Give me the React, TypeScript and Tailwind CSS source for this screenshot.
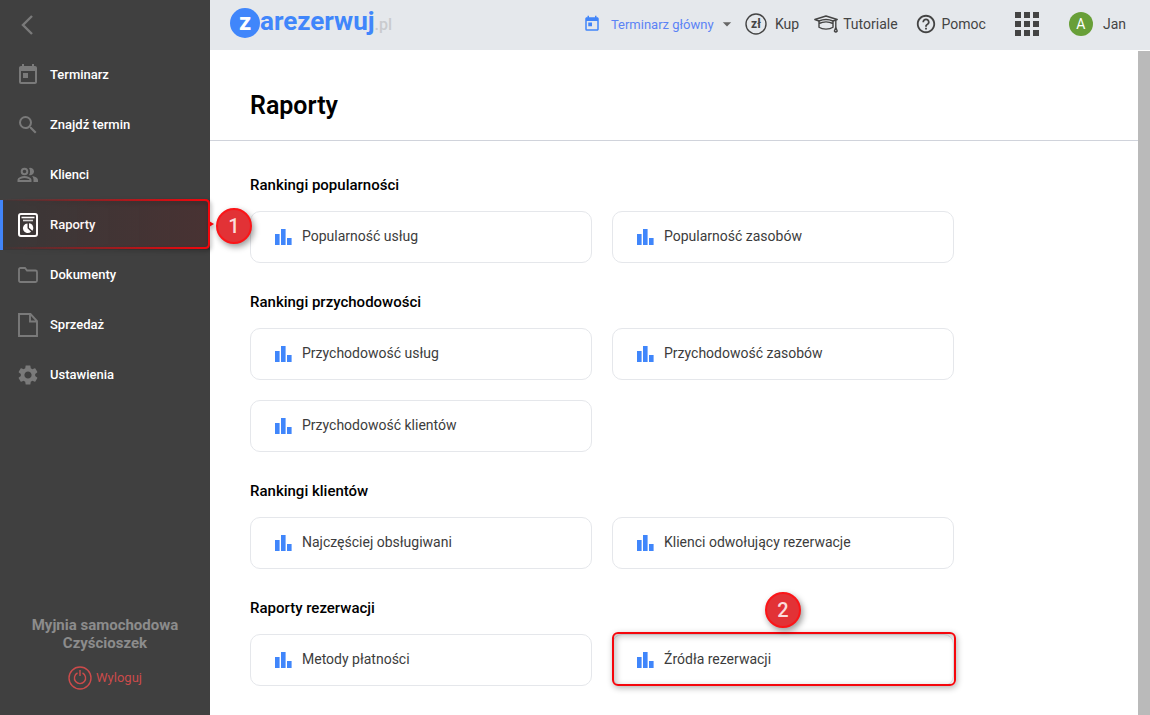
import type { ComponentType, ReactNode } from 'react'
import { MdArrowDropDown, MdOutlineHelpOutline, MdSearch, MdSettings, MdToday } from 'react-icons/md'

interface IconProps {
  className?: string
}

interface NavItem {
  label: string
  icon: ComponentType<IconProps>
  active?: boolean
}

interface ReportSection {
  title: string
  reports: string[]
}

function BackIcon() {
  return (
    <svg width="12" height="20" viewBox="0 0 12 20" fill="none" stroke="currentColor" strokeWidth="2.4">
      <path d="M11 1 2 10l9 9" />
    </svg>
  )
}

function CalendarIcon() {
  return <MdToday className="size-6" />
}

function SearchIcon() {
  return <MdSearch className="size-6" />
}

function PeopleIcon() {
  return (
    <svg width="22" height="16" viewBox="0 0 22 16" fill="none" stroke="currentColor" strokeWidth="2">
      <circle cx="7.5" cy="4.5" r="2.8" />
      <path d="M1.5 14v-1.2c0-1.6 3.6-2.8 6-2.8s6 1.2 6 2.8V14z" />
      <path d="M12 .9a3.8 3.8 0 1 1 0 7.2c1.4-2 1.4-5.2 0-7.2zM15 9c3 .5 6 1.8 6 4v2h-4.5v-2.2c0-1.6-.6-2.8-1.5-3.8z" fill="currentColor" stroke="none" />
    </svg>
  )
}

function ReportIcon() {
  return (
    <svg width="20" height="24" viewBox="0 0 20 24" fill="none" stroke="currentColor">
      <rect x="1" y="1" width="18" height="22" rx="2" strokeWidth="2" />
      <path d="M3.5 4.5h13" strokeWidth="1.6" />
      <path d="M5 7.5h10" strokeWidth="1.6" opacity=".8" />
      <path d="M9.5 10.5a4.8 4.8 0 1 0 3.6 8.2l-3.6-3.4z" fill="currentColor" stroke="none" />
      <path d="M11 10.2a4.8 4.8 0 0 1 3.4 7.5L11 14.8z" fill="currentColor" stroke="none" />
    </svg>
  )
}

function FolderIcon() {
  return (
    <svg width="20" height="16" viewBox="0 0 20 16" fill="none" stroke="currentColor" strokeWidth="1.8">
      <path d="M1 13.5v-11Q1 1 2.5 1H7l2 2.5h8.5Q19 3.5 19 5v8.5q0 1.5-1.5 1.5h-15Q1 15 1 13.5z" />
    </svg>
  )
}

function FileIcon() {
  return (
    <svg width="20" height="24" viewBox="0 0 20 24" fill="none" stroke="currentColor" strokeWidth="1.9">
      <path d="M1 1h11.5L19 8v15H1zM12 1v7.5h7" />
    </svg>
  )
}

function SettingsIcon() {
  return <MdSettings className="size-6" />
}

function PowerIcon() {
  return (
    <svg width="24" height="24" viewBox="0 0 24 24" fill="none" stroke="currentColor" strokeWidth="1.4">
      <circle cx="12" cy="12" r="11" />
      <path d="M9.5 7a5.6 5.6 0 1 0 5 0M12 4v6" />
    </svg>
  )
}

function CurrencyIcon() {
  return (
    <svg width="22" height="22" viewBox="0 0 22 22">
      <circle cx="11" cy="11" r="10" fill="none" stroke="currentColor" strokeWidth="1.4" />
      <text x="11" y="15" textAnchor="middle" fontSize="12" fontWeight="700" fill="currentColor">zł</text>
    </svg>
  )
}

function CapIcon() {
  return (
    <svg width="24" height="18" viewBox="0 0 24 18" fill="none" stroke="currentColor" strokeWidth="1.4" strokeLinejoin="round">
      <path d="M.8 4.5 12 1l11.2 3.5L19 6C15 4.3 9 4.3 5 6z" />
      <path d="M5 6v6.2c3.5 2.5 10.5 2.5 14 0V6M5 8.5c4-2 10-2 14 0M21.8 5v7.5" />
      <path d="m21.8 12.5 1.4 3.5q-1.4 2-2.8 0z" />
    </svg>
  )
}

function BarsIcon() {
  return (
    <svg width="17" height="16" viewBox="0 0 17 16" fill="#4086fb">
      <path d="M0 5h4.6v11H0zM6 0h4.6v16H6zM12 9h4.6v7H12z" />
    </svg>
  )
}

function AppsIcon() {
  return (
    <svg width="24" height="24" viewBox="0 0 24 24" fill="currentColor">
      <path d="M0 0h6v6H0zM9 0h6v6H9zM18 0h6v6h-6zM0 9h6v6H0zM9 9h6v6H9zM18 9h6v6h-6zM0 18h6v6H0zM9 18h6v6H9zM18 18h6v6h-6z" />
    </svg>
  )
}

const navItems: NavItem[] = [
  { label: 'Terminarz', icon: CalendarIcon },
  { label: 'Znajdź termin', icon: SearchIcon },
  { label: 'Klienci', icon: PeopleIcon },
  { label: 'Raporty', icon: ReportIcon, active: true },
  { label: 'Dokumenty', icon: FolderIcon },
  { label: 'Sprzedaż', icon: FileIcon },
  { label: 'Ustawienia', icon: SettingsIcon },
]

const sections: ReportSection[] = [
  { title: 'Rankingi popularności', reports: ['Popularność usług', 'Popularność zasobów'] },
  { title: 'Rankingi przychodowości', reports: ['Przychodowość usług', 'Przychodowość zasobów', 'Przychodowość klientów'] },
  { title: 'Rankingi klientów', reports: ['Najczęściej obsługiwani', 'Klienci odwołujący rezerwacje'] },
  { title: 'Raporty rezerwacji', reports: ['Metody płatności', 'Źródła rezerwacji'] },
]

const highlighted = 'Źródła rezerwacji'

function StepBadge({ children }: { children: ReactNode }) {
  return (
    <span className="flex size-9 items-center justify-center rounded-full border-2 border-[#fb1518] bg-[#e23236] text-xl font-medium text-[#fbdcdc] shadow-[2px_3px_6px_rgba(0,0,0,0.4)]">
      {children}
    </span>
  )
}

// Frame that fades in from the left and points at the first step
function NavFrame() {
  return (
    <svg className="pointer-events-none absolute -top-1 left-0 drop-shadow-[1px_2px_2px_rgba(0,0,0,0.4)]" width="216" height="56" viewBox="0 0 216 56">
      <defs>
        <linearGradient id="frame-line" gradientUnits="userSpaceOnUse" x1="0" y1="0" x2="210" y2="0">
          <stop offset="0" stopColor="#f5060c" stopOpacity="0" />
          <stop offset="1" stopColor="#f5060c" />
        </linearGradient>
        <linearGradient id="frame-fill" x1="0" y1="0" x2="1" y2="0">
          <stop offset="0" stopColor="#f5060c" stopOpacity="0" />
          <stop offset="1" stopColor="#f5060c" stopOpacity=".08" />
        </linearGradient>
      </defs>
      <path d="M0 4h205q4 0 4 4v40q0 4-4 4H0z" fill="url(#frame-fill)" />
      <path d="M0 4h205q4 0 4 4v40q0 4-4 4H0" fill="none" stroke="url(#frame-line)" strokeWidth="2" />
      <path d="m209 25 5 3-5 3z" fill="#f5060c" />
    </svg>
  )
}

function Sidebar() {
  return (
    <aside className="relative z-10 flex w-[210px] shrink-0 flex-col bg-[#404040]">
      <button aria-label="Zwiń menu" className="flex h-[50px] items-center pl-[21px] text-[#7a7a7a]">
        <BackIcon />
      </button>
      <nav>
        {navItems.map(({ label, icon: Icon, active }) => (
          <div key={label} className="relative">
            <a
              href="#"
              className={`flex h-[50px] items-center border-l-3 pl-3 text-[13px] font-medium text-white ${active ? 'border-[#4285f9] bg-[#3b3838]' : 'border-transparent'}`}
            >
              <span className={`mr-[9px] flex w-[26px] justify-center ${active ? 'text-white' : 'text-[#7a7a7a]'}`}>
                <Icon />
              </span>
              {label}
            </a>
            {active && (
              <>
                <NavFrame />
                <div className="absolute top-2 left-[216px]">
                  <StepBadge>1</StepBadge>
                </div>
              </>
            )}
          </div>
        ))}
      </nav>
      <div className="mt-auto flex flex-col items-center pb-[25px]">
        <p className="w-[160px] text-center text-[15px] leading-[18px] font-bold text-[#8c8c8c]">Myjnia samochodowa Czyścioszek</p>
        <button className="mt-3.5 flex items-center gap-1 text-[13px] leading-6 text-[#cc4b4b]">
          <PowerIcon />
          Wyloguj
        </button>
      </div>
    </aside>
  )
}

function Header() {
  return (
    <header className="flex h-[50px] items-center bg-[#e5e8ec] pr-6 pb-0.5 pl-5 text-sm text-[#444]">
      <a href="#" className="flex items-center pb-0.5 font-bold">
        <span className="flex size-[30px] items-center justify-center rounded-full bg-[#4086fb] pb-0.5 text-2xl leading-6 text-white">z</span>
        <span className="flex items-baseline leading-6">
          <span className="text-[26px] text-[#4086fb]">arezerwuj</span>
          <span className="text-base font-medium text-[#c9cbce]">.pl</span>
        </span>
      </a>
      <div className="ml-auto flex items-center">
        <MdToday className="mr-2.5 size-[18px] text-[#4285f9]" />
        <div className="relative">
          <select aria-label="Terminarz" className="w-[122px] appearance-none text-[13px] text-[#5b83f5]">
            <option>Terminarz główny</option>
          </select>
          <MdArrowDropDown className="pointer-events-none absolute top-0 -right-1 size-5 text-[#666]" />
        </div>
      </div>
      <nav className="ml-3 flex items-center">
        <a href="#" className="flex items-center gap-2">
          <CurrencyIcon />
          Kup
        </a>
        <a href="#" className="ml-[15px] flex items-center gap-[5px]">
          <CapIcon />
          Tutoriale
        </a>
        <a href="#" className="ml-[17px] flex items-center gap-[5px]">
          <MdOutlineHelpOutline className="size-[22px]" />
          Pomoc
        </a>
      </nav>
      <button aria-label="Aplikacje" className="ml-[29px]">
        <AppsIcon />
      </button>
      <button className="ml-[30px] flex items-center gap-2.5">
        <span className="flex size-6 items-center justify-center rounded-full bg-[#689f38] text-sm text-white">A</span>
        Jan
      </button>
    </header>
  )
}

function ReportCard({ label }: { label: string }) {
  return (
    <div className="relative">
      <a href="#" className="flex h-[52px] items-center gap-2.5 rounded-[10px] border border-[#e5e7eb] bg-white pl-6 text-sm text-[#3c3c3c]">
        <BarsIcon />
        <span className="pb-0.5">{label}</span>
      </a>
      {label === highlighted && (
        <>
          <div className="pointer-events-none absolute -top-0.5 -right-0.5 bottom-0 left-0 rounded-md border-2 border-[#f5060c] shadow-[1px_2px_6px_rgba(0,0,0,0.3),inset_2px_2px_6px_rgba(0,0,0,0.25)]" />
          <div className="absolute bottom-full left-1/2 mb-1.5 -translate-x-1/2">
            <StepBadge>2</StepBadge>
          </div>
        </>
      )}
    </div>
  )
}

export default function App() {
  return (
    <div className="flex min-h-screen bg-white font-['Roboto',sans-serif]">
      <Sidebar />
      <div className="flex min-w-0 flex-1 flex-col">
        <Header />
        <div className="flex flex-1">
          <main className="min-w-0 flex-1">
            <div className="border-b border-[#d0d3db] px-10 pt-[41px] pb-[19px]">
              <h1 className="text-[25px] leading-[30px] font-semibold text-black">Raporty</h1>
            </div>
            <div className="flex max-w-[784px] flex-col gap-[29px] px-10 pt-[34px] pb-6">
              {sections.map(section => (
                <section key={section.title}>
                  <h2 className="mb-4 text-[15px] leading-5 font-medium text-black">{section.title}</h2>
                  <div className="grid grid-cols-2 gap-5">
                    {section.reports.map(report => (
                      <ReportCard key={report} label={report} />
                    ))}
                  </div>
                </section>
              ))}
            </div>
          </main>
          {/* Scroll track */}
          <div className="mt-px w-3 shrink-0 bg-[#bababa]" />
        </div>
      </div>
    </div>
  )
}
